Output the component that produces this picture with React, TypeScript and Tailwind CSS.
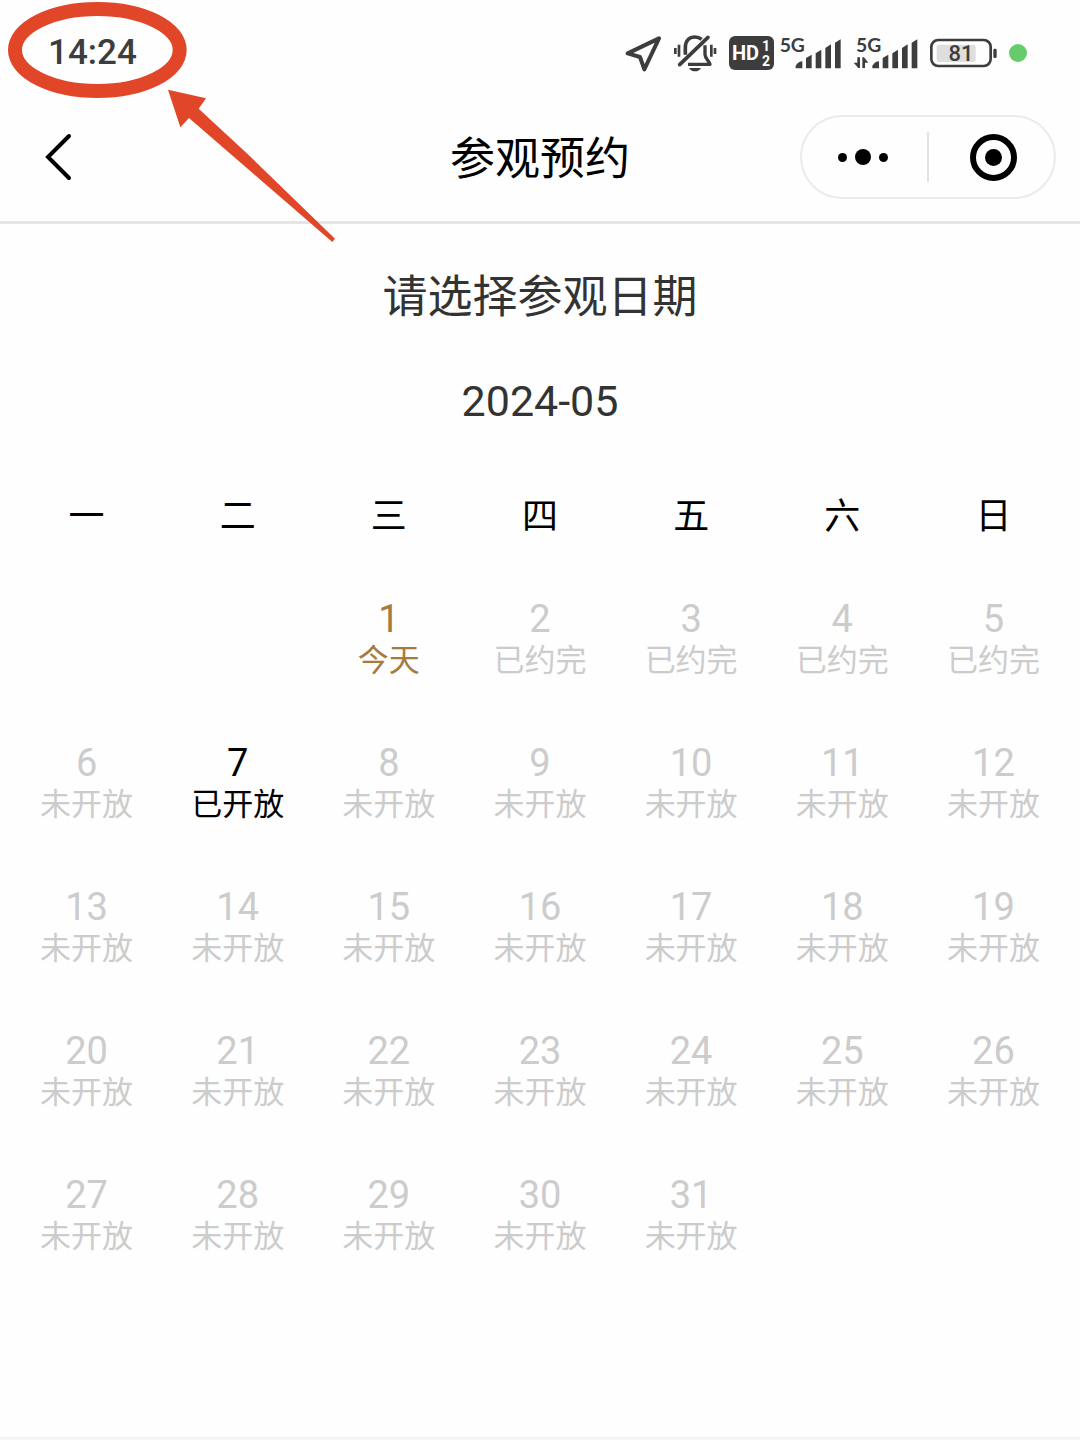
type DayStatus = "today" | "full" | "open" | "closed"

const weekdays = ["一", "二", "三", "四", "五", "六", "日"]

const labels: Record<DayStatus, string> = {
  today: "今天",
  full: "已约完",
  open: "已开放",
  closed: "未开放",
}

const colors: Record<DayStatus, string> = {
  today: "text-[#a57c40]",
  full: "text-[#cccccc]",
  open: "text-black",
  closed: "text-[#cccccc]",
}

const FIRST_WEEKDAY = 2
const DAYS_IN_MONTH = 31

const getStatus = (day: number): DayStatus => {
  if (day === 1) return "today"
  if (day <= 5) return "full"
  if (day === 7) return "open"
  return "closed"
}

const weeks = Array.from({ length: 5 }, (_, week) =>
  Array.from({ length: 7 }, (_, col) => {
    const day = week * 7 + col - FIRST_WEEKDAY + 1
    return day > 0 && day <= DAYS_IN_MONTH ? day : null
  })
)

const LocationIcon = () => (
  <svg className="w-[37px] h-[38px]" viewBox="33 42 111 114" fill="none" aria-hidden="true">
    <path d="M135 55 L41 100 L78 111 L91 148 Z" stroke="#3d3d3d" strokeWidth="12" strokeLinejoin="round" />
  </svg>
)

const MutedBellIcon = () => (
  <svg className="w-[43px] h-[38px]" viewBox="180 42 129 114" fill="none" aria-hidden="true">
    <g stroke="#3d3d3d" strokeWidth="10">
      <path d="M184 84 V102 M195 74 V110" strokeWidth="8" />
      <path d="M292 74 V110 M303 84 V102" strokeWidth="8" />
      <path d="M214 104 V83 C214 62 226 51 243 51 C252 51 258 54 263 58" strokeWidth="11" />
      <path d="M273 76 V104 C274 116 284 121 288 133 H222" strokeLinejoin="round" />
      <path d="M197 134 L282 52" strokeWidth="11" strokeLinecap="round" />
    </g>
    <path d="M225 144 H261 C257 151 251 154 243 154 C235 154 229 151 225 144 Z" fill="#3d3d3d" />
  </svg>
)

const HdBadge = () => (
  <svg className="w-[45px] h-[34px]" viewBox="0 0 45 34" aria-label="HD 1 2">
    <rect width="45" height="34" rx="6" fill="#3d3d3d" />
    <g fill="#ffffff" className="font-['Roboto',sans-serif] font-bold">
      <text x="3" y="24" fontSize="20">HD</text>
      <text x="33" y="15" fontSize="14">1</text>
      <text x="33" y="30" fontSize="14">2</text>
    </g>
  </svg>
)

const SignalBars = () => (
  <g fill="#3d3d3d">
    <path d="M0 87 V79 Q9 66 20 66 V87 Z" />
    <path d="M31 87 V56 L48 46 V87 Z" />
    <path d="M60 87 V42 L77 31 V87 Z" />
    <path d="M89 87 V26 L106 15 V87 Z" />
    <path d="M118 87 V10 L135 0 V87 Z" />
  </g>
)

const Signal = ({ data }: { data?: boolean }) => (
  <svg
    className={data ? "w-[65px] h-[34px] overflow-visible" : "w-[61px] h-[34px] overflow-visible"}
    viewBox={data ? "36 46 195 102" : "494 46 183 102"}
    aria-label="5G"
  >
    <text
      x={data ? 45 : 493}
      y="94"
      fontSize="58"
      fill="#3d3d3d"
      className="font-['Lato',sans-serif] font-bold"
    >
      5G
    </text>
    <g transform={data ? "translate(94 56)" : "translate(541 56)"}>
      <SignalBars />
    </g>
    {data && (
      <path
        d="M57 110 V142 H52 L38 126 H49 V110 Z M64 142 V110 H69 L82 126 H72 V142 Z"
        fill="#3d3d3d"
      />
    )}
  </svg>
)

const Battery = () => (
  <svg className="w-[67px] h-[30px] overflow-visible" viewBox="270 52 201 90" aria-label="81%">
    <rect x="290" y="72" width="117" height="52" rx="7" fill="#dedede" />
    <rect x="274" y="58" width="178" height="78" rx="21" fill="none" stroke="#3d3d3d" strokeWidth="8" />
    <rect x="460" y="84" width="10" height="28" rx="4" fill="#3d3d3d" />
    <text
      x="363"
      y="121"
      fontSize="66"
      fill="#3d3d3d"
      textAnchor="middle"
      className="font-['Roboto',sans-serif] font-medium"
    >
      81
    </text>
  </svg>
)

const StatusBar = () => (
  <div className="flex h-[106px] items-center justify-between pl-12 pr-[53px]">
    <time className="font-['Roboto',sans-serif] text-[35px] leading-[40px] font-medium text-[#3d3d3d]">
      14:24
    </time>
    <div className="flex items-center gap-3">
      <LocationIcon />
      <MutedBellIcon />
      <div className="flex items-center gap-1.5">
        <HdBadge />
        <Signal />
      </div>
      <Signal data />
      <Battery />
      <span className="size-[18px] rounded-full bg-[#66cc6a]" />
    </div>
  </div>
)

const NavBar = () => (
  <header className="grid grid-cols-[1fr_auto_1fr] items-center border-b-[3px] border-[#e5e5e5] pt-[9px] pb-[22px] px-6">
    <button type="button" aria-label="返回" className="justify-self-start pl-4">
      <svg className="w-[36px] h-[48px]" viewBox="0 0 36 48" fill="none" stroke="#000000" strokeWidth="4">
        <path d="M29 3 L8 24 L29 45" strokeLinecap="round" />
      </svg>
    </button>
    <h1 className="pb-0.5 text-[45px] leading-[60px] text-black">参观预约</h1>
    <div className="flex h-[84px] w-64 items-center justify-self-end rounded-full border-2 border-[#ebebeb]">
      <button type="button" aria-label="更多" className="flex flex-1 items-center justify-center gap-2 pr-1">
        <span className="size-[9px] rounded-full bg-black" />
        <span className="size-4 rounded-full bg-black" />
        <span className="size-[9px] rounded-full bg-black" />
      </button>
      <span className="h-[50px] w-0.5 bg-[#e3e3e3]" />
      <button type="button" aria-label="关闭" className="flex flex-1 items-center justify-center pl-1">
        <span className="flex size-[47px] items-center justify-center rounded-full border-6 border-black">
          <span className="size-[17px] rounded-full bg-black" />
        </span>
      </button>
    </div>
  </header>
)

const DayCell = ({ day }: { day: number }) => {
  const status = getStatus(day)

  return (
    <button
      type="button"
      disabled={status === "full" || status === "closed"}
      className={`flex w-full flex-col items-center ${colors[status]}`}
    >
      <span className="font-['Roboto',sans-serif] text-[38px] leading-[46px]">{day}</span>
      <span className="text-[31px] leading-[32px]">{labels[status]}</span>
    </button>
  )
}

const Calendar = () => (
  <table className="w-full table-fixed">
    <thead>
      <tr>
        {weekdays.map((name) => (
          <th key={name} scope="col" className="pb-[57px] text-[36px] leading-[52px] font-normal text-black">
            {name}
          </th>
        ))}
      </tr>
    </thead>
    <tbody>
      {weeks.map((week, index) => (
        <tr key={index} className="h-36">
          {week.map((day, col) => (
            <td key={col} className="align-top">
              {day && <DayCell day={day} />}
            </td>
          ))}
        </tr>
      ))}
    </tbody>
  </table>
)

// Red circle and arrow pointing at the clock
const ClockMark = () => (
  <svg
    className="pointer-events-none absolute top-0 left-0 w-[350px] h-[250px]"
    viewBox="0 0 1050 750"
    fill="none"
    aria-hidden="true"
  >
    <ellipse cx="292" cy="150" rx="247" ry="123" stroke="#e24629" strokeWidth="42" />
    <path
      d="M504 269 L618 295 L596 326 L742 461 L1005 716 L997 726 L567 354 L541 382 Z"
      fill="#e24629"
    />
  </svg>
)

const App = () => (
  <div className="relative flex min-h-screen flex-col bg-[#fefefe] font-['Noto_Sans_CJK_SC',sans-serif]">
    <StatusBar />
    <NavBar />
    <main className="flex-1 px-[11px] pt-10 text-center">
      <h2 className="text-[45px] leading-[60px] text-[#333333]">请选择参观日期</h2>
      <p className="mt-[47px] mb-14 font-['Roboto',sans-serif] text-[43px] leading-[60px] text-[#333333]">
        2024-05
      </p>
      <Calendar />
    </main>
    <footer className="h-[3px] bg-[#f5f5f5]" />
    <ClockMark />
  </div>
)

export default App
